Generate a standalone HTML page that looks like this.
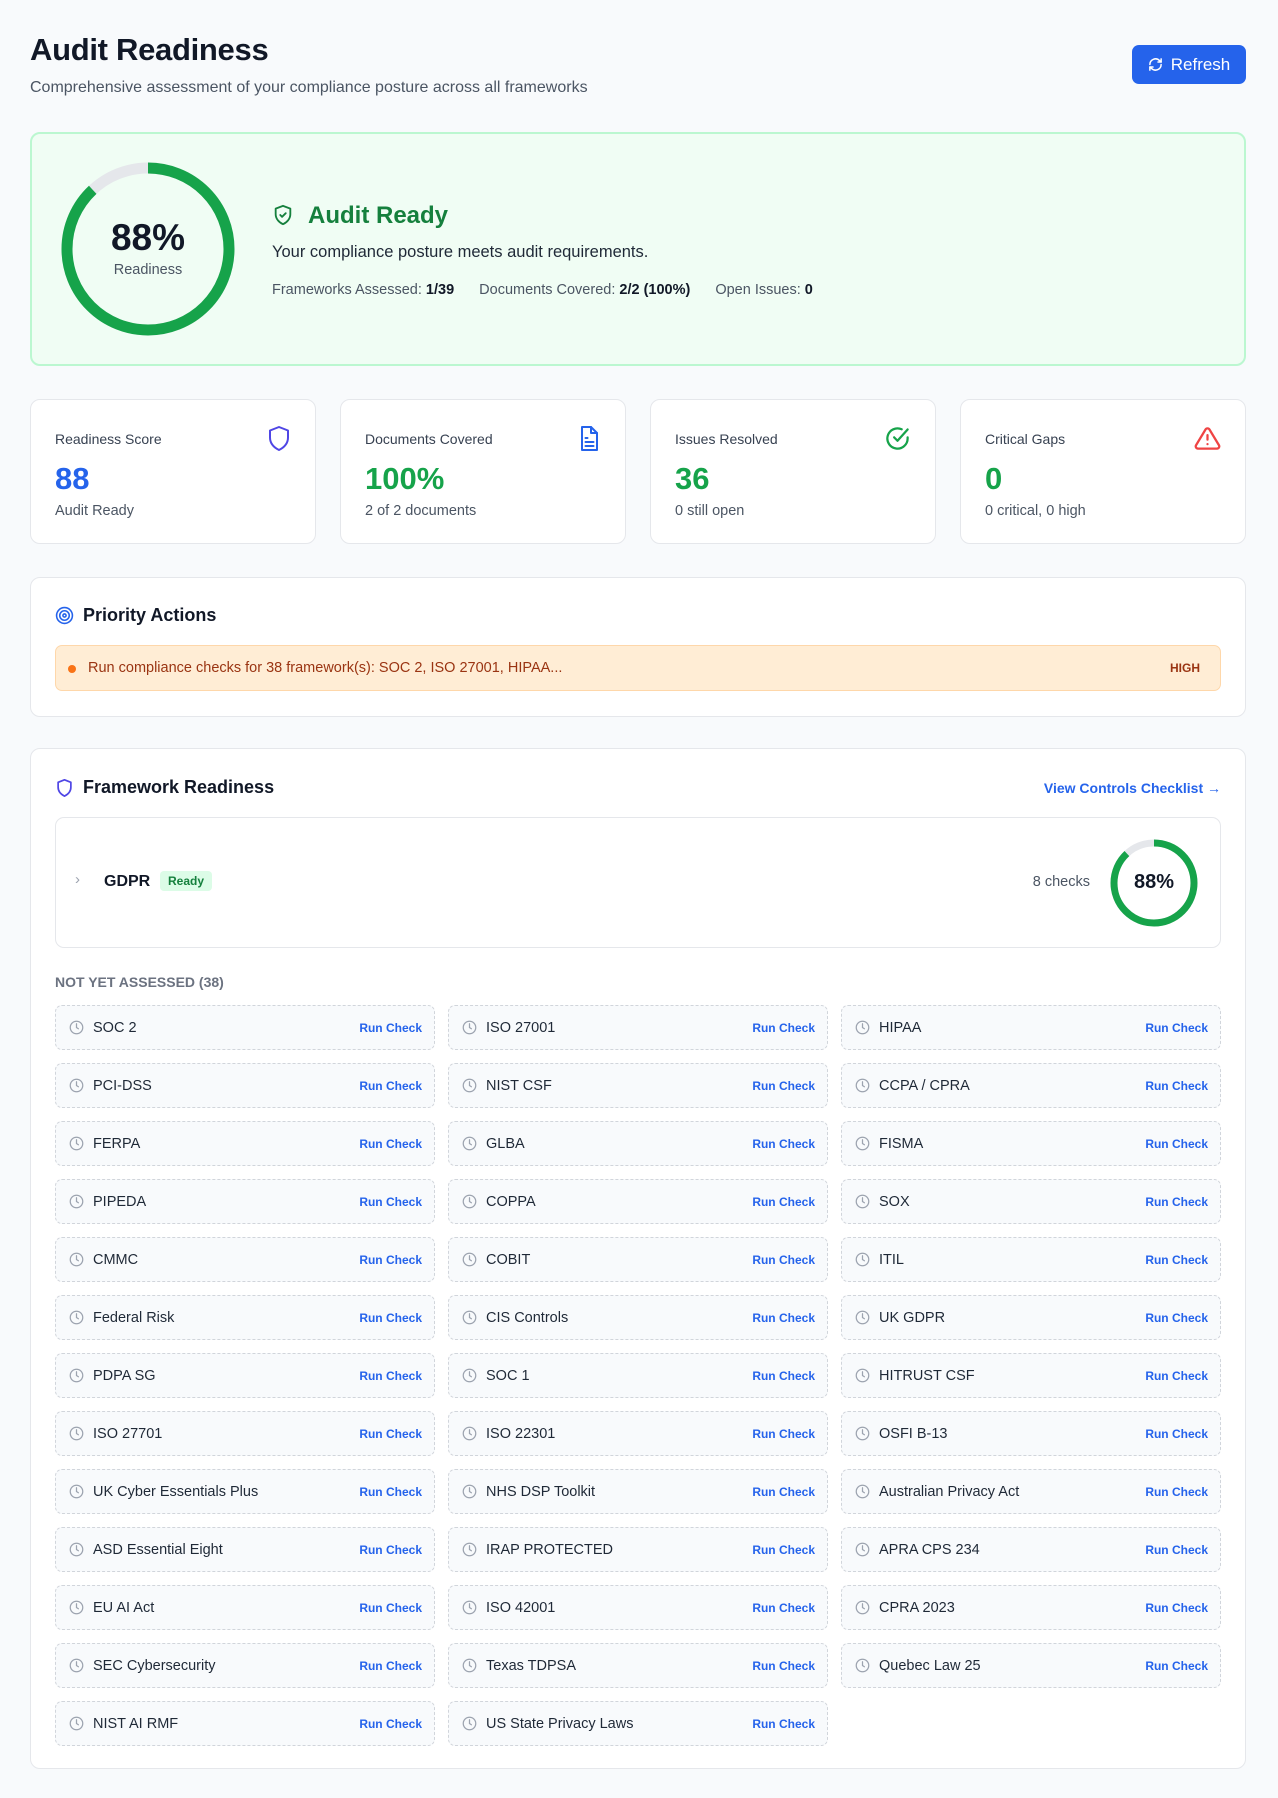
<!DOCTYPE html>
<html><head><meta charset="utf-8"><style>
*{box-sizing:border-box;margin:0;padding:0}
body{width:1278px;height:1798px;background:#f8fafc;font-family:"Liberation Sans",Arial,sans-serif;color:#111827;position:relative;overflow:hidden}
.abs{position:absolute}
h1{position:absolute;left:30px;top:32px;font-size:31px;font-weight:700;letter-spacing:-0.3px;color:#111827}
.sub{left:30px;top:79px;font-size:16px;color:#4b5563}
.btn{left:1132px;top:45px;width:114px;height:39px;background:#2563eb;border-radius:7px;color:#fff;font-size:17px;display:flex;align-items:center;justify-content:center;gap:8px}
.hero{left:30px;top:132px;width:1216px;height:234px;background:#f0fdf4;border:2px solid #bbf7d0;border-radius:10px}
.card{background:#fff;border:1px solid #e5e7eb;border-radius:10px}
.stat{top:399px;width:286px;height:145px}
.stat .l{position:absolute;left:24px;top:31px;font-size:14px;color:#374151}
.stat .v{position:absolute;left:24px;top:61px;font-size:31px;font-weight:700}
.stat .s{position:absolute;left:24px;top:103px;font-size:14.5px;color:#4b5563}
.stat svg{position:absolute;right:24px;top:25px}
.item{position:absolute;width:380px;height:45px;background:#f8fafc;border:1px dashed #d1d5db;border-radius:7px;display:flex;align-items:center;padding:0 12px 0 13px;font-size:14.5px;color:#1f2937}
.item svg{margin-right:9px}
.item .rc{margin-left:auto;color:#2563eb;font-size:12px;font-weight:600}
</style></head><body>
<h1>Audit Readiness</h1>
<div class="abs sub">Comprehensive assessment of your compliance posture across all frameworks</div>
<div class="abs btn"><svg width="15" height="15" viewBox="0 0 24 24" fill="none" stroke="#fff" stroke-width="2.4" stroke-linecap="round" stroke-linejoin="round"><path d="M3 12a9 9 0 0 1 15.5-6.2L21 8"/><path d="M21 3v5h-5"/><path d="M21 12a9 9 0 0 1-15.5 6.2L3 16"/><path d="M3 21v-5h5"/></svg>Refresh</div>

<div class="abs hero">
 <svg class="abs" style="left:26px;top:25px" width="180" height="180" viewBox="0 0 180 180">
  <circle cx="90" cy="90" r="81" fill="none" stroke="#e5e7eb" stroke-width="11"/>
  <circle cx="90" cy="90" r="81" fill="none" stroke="#16a34a" stroke-width="11" stroke-dasharray="447.9 600" transform="rotate(-90 90 90)"/>
 </svg>
 <div class="abs" style="left:26px;top:83px;width:180px;text-align:center;font-size:37px;font-weight:700;color:#111827">88%</div>
 <div class="abs" style="left:26px;top:128px;width:180px;text-align:center;font-size:14.5px;color:#4b5563">Readiness</div>
 <svg class="abs" style="left:240px;top:70px" width="22" height="22" viewBox="0 0 24 24" fill="none" stroke="#15803d" stroke-width="2" stroke-linecap="round" stroke-linejoin="round"><path d="M12 2l8 3v6c0 5-3.5 9-8 11-4.5-2-8-6-8-11V5z"/><path d="M9 12l2 2 4-4"/></svg>
 <div class="abs" style="left:276px;top:68px;font-size:24px;font-weight:700;color:#15803d">Audit Ready</div>
 <div class="abs" style="left:240px;top:109px;font-size:16.5px;color:#1f2937">Your compliance posture meets audit requirements.</div>
 <div class="abs" style="left:240px;top:148px;font-size:14.5px;color:#4b5563;white-space:nowrap">Frameworks Assessed: <b style="color:#111827">1/39</b><span style="margin-left:25px">Documents Covered: <b style="color:#111827">2/2 (100%)</b></span><span style="margin-left:25px">Open Issues: <b style="color:#111827">0</b></span></div>
</div>

<div class="abs card stat" style="left:30px"><div class="l">Readiness Score</div><svg width="24" height="27" viewBox="0 0 24 27" fill="none" stroke="#4f46e5" stroke-width="2" stroke-linejoin="round"><path d="M12 2l9 3.5v7c0 6-4 10-9 12.5C7 22.5 3 18.5 3 12.5v-7z"/></svg><div class="v" style="color:#2563eb">88</div><div class="s">Audit Ready</div></div>
<div class="abs card stat" style="left:340px"><div class="l">Documents Covered</div><svg width="24" height="27" viewBox="0 0 24 27" fill="none" stroke="#2563eb" stroke-width="2" stroke-linecap="round" stroke-linejoin="round"><path d="M14 2H5v23h15V8z"/><path d="M14 2v6h6"/><path d="M8.5 13h2M8.5 17h8M8.5 21h8"/></svg><div class="v" style="color:#16a34a">100%</div><div class="s">2 of 2 documents</div></div>
<div class="abs card stat" style="left:650px"><div class="l">Issues Resolved</div><svg width="27" height="27" viewBox="0 0 24 24" fill="none" stroke="#16a34a" stroke-width="2" stroke-linecap="round" stroke-linejoin="round"><path d="M21 11v1a9 9 0 1 1-5.3-8.2"/><path d="M21 4L12 14l-3-3"/></svg><div class="v" style="color:#16a34a">36</div><div class="s">0 still open</div></div>
<div class="abs card stat" style="left:960px"><div class="l">Critical Gaps</div><svg width="27" height="27" viewBox="0 0 24 24" fill="none" stroke="#ef4444" stroke-width="2" stroke-linecap="round" stroke-linejoin="round"><path d="M10.3 3.9L1.8 18a2 2 0 0 0 1.7 3h17a2 2 0 0 0 1.7-3L13.7 3.9a2 2 0 0 0-3.4 0z"/><path d="M12 9v4M12 17h.01"/></svg><div class="v" style="color:#16a34a">0</div><div class="s">0 critical, 0 high</div></div>

<div class="abs card" style="left:30px;top:577px;width:1216px;height:140px">
 <svg class="abs" style="left:24px;top:28px" width="19" height="19" viewBox="0 0 24 24" fill="none" stroke="#2563eb" stroke-width="2"><circle cx="12" cy="12" r="10"/><circle cx="12" cy="12" r="6"/><circle cx="12" cy="12" r="2"/></svg>
 <div class="abs" style="left:52px;top:27px;font-size:18px;font-weight:700">Priority Actions</div>
 <div class="abs" style="left:24px;top:67px;width:1166px;height:46px;background:#ffedd5;border:1px solid #fed7aa;border-radius:7px">
  <div class="abs" style="left:12px;top:19px;width:8px;height:8px;border-radius:50%;background:#f97316"></div>
  <div class="abs" style="left:32px;top:14px;font-size:14.5px;color:#9a3412">Run compliance checks for 38 framework(s): SOC 2, ISO 27001, HIPAA...</div>
  <div class="abs" style="right:20px;top:15px;font-size:12px;font-weight:700;color:#9a3412">HIGH</div>
 </div>
</div>

<div class="abs card" style="left:30px;top:748px;width:1216px;height:1021px">
 <svg class="abs" style="left:25px;top:29px" width="17" height="20" viewBox="0 0 24 27" fill="none" stroke="#4f46e5" stroke-width="2.4" stroke-linejoin="round"><path d="M12 2l9 3.5v7c0 6-4 10-9 12.5C7 22.5 3 18.5 3 12.5v-7z"/></svg>
 <div class="abs" style="left:52px;top:28px;font-size:18px;font-weight:700">Framework Readiness</div>
 <div class="abs" style="right:24px;top:31px;font-size:14px;color:#2563eb;font-weight:600">View Controls Checklist →</div>
 <div class="abs" style="left:24px;top:68px;width:1166px;height:131px;border:1px solid #e5e7eb;border-radius:9px">
  <div class="abs" style="left:19px;top:53px;font-size:15px;color:#9ca3af">›</div>
  <div class="abs" style="left:48px;top:55px;font-size:16px;font-weight:600">GDPR</div>
  <div class="abs" style="left:104px;top:53px;padding:3px 8px;background:#dcfce7;color:#15803d;border-radius:4px;font-size:12px;font-weight:600">Ready</div>
  <div class="abs" style="right:130px;top:56px;font-size:14.5px;color:#4b5563">8 checks</div>
  <svg class="abs" style="right:21px;top:20px" width="90" height="90" viewBox="0 0 90 90"><circle cx="45" cy="45" r="40" fill="none" stroke="#e5e7eb" stroke-width="7"/><circle cx="45" cy="45" r="40" fill="none" stroke="#16a34a" stroke-width="7" stroke-dasharray="221.2 300" transform="rotate(-90 45 45)"/></svg>
  <div class="abs" style="right:21px;top:53px;width:90px;text-align:center;font-size:20px;font-weight:700">88%</div>
 </div>
 <div class="abs" style="left:24px;top:225px;font-size:14px;font-weight:600;color:#6b7280">NOT YET ASSESSED (38)</div>
 <div id="g"></div>
</div>
<script>
var n=["SOC 2","ISO 27001","HIPAA","PCI-DSS","NIST CSF","CCPA / CPRA","FERPA","GLBA","FISMA","PIPEDA","COPPA","SOX","CMMC","COBIT","ITIL","Federal Risk","CIS Controls","UK GDPR","PDPA SG","SOC 1","HITRUST CSF","ISO 27701","ISO 22301","OSFI B-13","UK Cyber Essentials Plus","NHS DSP Toolkit","Australian Privacy Act","ASD Essential Eight","IRAP PROTECTED","APRA CPS 234","EU AI Act","ISO 42001","CPRA 2023","SEC Cybersecurity","Texas TDPSA","Quebec Law 25","NIST AI RMF","US State Privacy Laws"];
var h="",ic='<svg width="15" height="15" viewBox="0 0 24 24" fill="none" stroke="#9ca3af" stroke-width="2" stroke-linecap="round"><circle cx="12" cy="12" r="10"/><path d="M12 6v6l3 2"/></svg>';
n.forEach(function(t,i){var c=i%3,r=Math.floor(i/3);h+='<div class="item" style="left:'+(24+c*393)+'px;top:'+(256+r*58)+'px">'+ic+t+'<span class="rc">Run Check</span></div>';});
document.getElementById("g").outerHTML=h;
</script>
</body></html>
